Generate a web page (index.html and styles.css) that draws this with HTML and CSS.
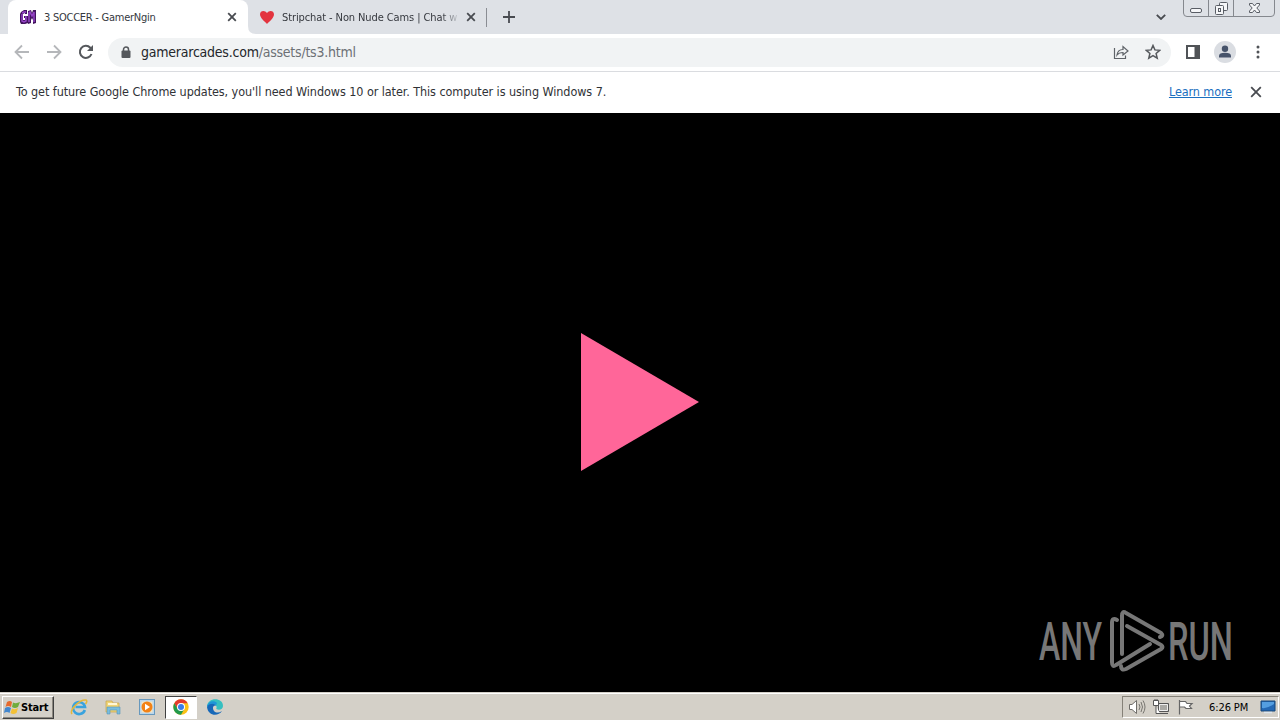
FILE: index.html
```html
<!DOCTYPE html>
<html lang="en">
<head>
<meta charset="utf-8">
<title>3 SOCCER - GamerNgin</title>
<link rel="stylesheet" href="styles.css">
</head>
<body>
<div class="screen">
  <header class="tabstrip">
    <div class="tab tab-active">
      <svg class="favicon" width="16" height="16" viewBox="0 0 16 16"><path d="M1 3L4 1H7V5H5V4L3 5V11H5V9H4V7H8V14L5 15H1L0 13V5ZM8 2L11 1L12 4L13 1H16V14L13 15V9L12 11L11 9V14L8 15Z" fill="#43145f"/><path d="M2 4L4 3H6M2 5V12L4 13L6 12V8H5M9 13V4L10 3L12 7L14 3V13" fill="none" stroke="#9544c6" stroke-width="1.5"/></svg>
      <span class="tab-title title-one">3 SOCCER - GamerNgin</span>
      <svg class="tab-close" width="10" height="10" viewBox="0 0 10 10"><path d="M1.2 1.2L8.8 8.8M8.8 1.2L1.2 8.8"/></svg>
      <svg class="tab-foot" width="8" height="8" viewBox="0 0 8 8"><path d="M0 0Q0 8 8 8H0Z" fill="#fff"/></svg>
    </div>
    <div class="tab tab-second">
      <svg class="favicon" width="16" height="16" viewBox="0 0 16 16"><path d="M8 15C6 13 1 9 1 5.3C1 1.4 6 .8 8 4C10 .8 15 1.4 15 5.3C15 9 10 13 8 15Z" fill="#e3343f"/></svg>
      <span class="tab-title title-two">Stripchat - Non Nude Cams | Chat w</span>
      <svg class="tab-close" width="10" height="10" viewBox="0 0 10 10"><path d="M1.2 1.2L8.8 8.8M8.8 1.2L1.2 8.8"/></svg>
    </div>
    <span class="tab-divider"></span>
    <svg class="new-tab" width="12" height="12" viewBox="0 0 12 12"><path d="M6 0V12M0 6H12"/></svg>
    <svg class="tab-search" width="10" height="6" viewBox="0 0 10 6"><path d="M.8 .8L5 5L9.200 .8"/></svg>
    <svg class="window-buttons" width="95" height="18" viewBox="0 0 95 18"><path d="M1.500 0V13Q1.500 16.500 5 16.500H89Q92.500 16.500 92.500 13V0M26.500 0V16M51.500 0V16" fill="none" stroke="#85888e"/><g fill="#f5f6f8" stroke="#595d65"><rect x="8.500" y="8.500" width="11" height="4" rx="1.500"/><rect x="37.500" y="2.500" width="8" height="8" rx="1"/><rect x="33.500" y="5.500" width="8" height="9" rx="1"/><rect x="36.500" y="8.500" width="2" height="3"/><path d="M67.500 3.500H70.500L72.500 6L74.500 3.500H77.500V5L74.800 8L77.500 11V12.500H74.500L72.500 10L70.500 12.500H67.500V11L70.200 8L67.500 5Z"/></g></svg>
  </header>
  <div class="toolbar">
    <svg class="nav-icon" width="16" height="16" viewBox="0 0 16 16"><path d="M15 8H2M8 1.500L1.500 8L8 14.500" fill="none" stroke="#b5b7ba" stroke-width="1.800"/></svg>
    <svg class="nav-icon" width="16" height="16" viewBox="0 0 16 16"><path d="M1 8H14M8 1.500L14.500 8L8 14.500" fill="none" stroke="#b5b7ba" stroke-width="1.800"/></svg>
    <svg class="nav-icon" width="16" height="16" viewBox="0 0 16 16"><path d="M13.500 10A6 6 0 1 1 12.300 3.800L14 5.500" fill="none" stroke="#55585c" stroke-width="2"/><path d="M15 1V7H9Z" fill="#55585c"/></svg>
    <div class="omnibox">
      <svg class="lock" width="10" height="13" viewBox="0 0 10 13"><path d="M2.500 6V3.500A2.500 2.500 0 0 1 7.500 3.500V6" fill="none" stroke="#55585c" stroke-width="1.500"/><rect x="0.500" y="4.500" width="9" height="7.500" rx="1" fill="#55585c"/></svg>
      <span class="url"><span class="host">gamerarcades.com</span><span class="path">/assets/ts3.html</span></span>
      <svg class="share" width="16" height="16" viewBox="0 0 16 16"><path d="M1.500 4V14.500H12.500V11.500M4 11C4.500 7 7 5.500 10 5.500V2.500L15 7L10 11V8.500C7.500 8.500 5.500 9 4 11Z" fill="none" stroke="#5f6368" stroke-width="1.200"/></svg>
      <svg class="star" width="16" height="16" viewBox="0 0 16 16"><path d="M8 1.500L9.900 5.900L14.700 6.300L11.100 9.500L12.200 14.200L8 11.700L3.800 14.200L4.900 9.500L1.300 6.300L6.100 5.900Z" fill="none" stroke="#55585c" stroke-width="1.500"/></svg>
    </div>
    <svg class="side-panel" width="14" height="14" viewBox="0 0 14 14"><path d="M1 1H13V13H1Z" fill="none" stroke="#505357" stroke-width="2"/><path d="M8.500 0H14V14H8.500Z" fill="#505357"/></svg>
    <svg class="avatar" width="22" height="22" viewBox="0 0 22 22"><circle cx="11" cy="11" r="11" fill="#dadde2"/><circle cx="11" cy="7.700" r="3.200" fill="#46536a"/><path d="M5 16.500V15Q5 11.800 11 11.800Q17 11.800 17 15V16.500Z" fill="#46536a"/></svg>
    <svg class="menu" width="4" height="14" viewBox="0 0 4 14"><g fill="#505357"><circle cx="2" cy="2" r="1.500"/><circle cx="2" cy="7" r="1.500"/><circle cx="2" cy="12" r="1.500"/></g></svg>
  </div>
  <div class="infobar">
    <span class="notice">To get future Google Chrome updates, you'll need Windows 10 or later. This computer is using Windows 7.</span>
    <span class="learn">Learn more</span>
    <svg class="info-close" width="12" height="12" viewBox="0 0 12 12"><path d="M1.200 1.200L10.800 10.800M10.800 1.200L1.200 10.800"/></svg>
  </div>
  <main class="content">
    <svg class="play" width="118" height="138" viewBox="0 0 118 138"><path d="M0 0L118 69L0 138Z" fill="#ff6699"/></svg>
    <svg class="watermark" width="210" height="70" viewBox="0 0 210 70">
      <text class="brand" x="4" y="54" textLength="63" lengthAdjust="spacingAndGlyphs">ANY</text>
      <g fill="none" stroke="#777" stroke-width="4" stroke-linejoin="round" stroke-linecap="round"><path d="M82 14Q77 11 77 17V56Q77 62 81 59L115 38"/><path d="M87 48V10Q87 4 91 7L126 27Q129 30 125 31"/><path d="M92 20L126 39Q129 41 126 43L91 63Q86 65 86 60"/></g>
      <text class="brand" x="133" y="54" textLength="65" lengthAdjust="spacingAndGlyphs">RUN</text>
    </svg>
  </main>
  <footer class="taskbar">
    <div class="start">
      <svg width="17" height="16" viewBox="0 0 17 16"><path d="M3 3Q6 1 8 3L7 8Q4 6 1.500 8Z" fill="#e66a2d"/><path d="M9 3.500Q12 5 16 3L14 8Q11 10 8 8Z" fill="#70ac3c"/><path d="M1 9Q4 7 7 9L5.500 14Q3 12 0 14Z" fill="#4387ce"/><path d="M8 9.500Q11 11 14 9L12.500 14Q9 16 6.500 14Z" fill="#f4c136"/></svg>
      <span class="start-label">Start</span>
    </div>
    <div class="launch">
      <svg width="18" height="18" viewBox="0 0 18 18"><path d="M14.800 12A6 6 0 1 1 15 9H5.500" fill="none" stroke="#3aa3de" stroke-width="2.600"/><path d="M2 16C-1 12 10 1 16 2C18 3 15.500 6 15.500 6" fill="none" stroke="#e5b83b" stroke-width="1.500"/></svg>
    </div>
    <div class="launch">
      <svg width="18" height="18" viewBox="0 0 18 18"><path d="M2 3H8L9 5H15V14H2Z" fill="#efd477" stroke="#c7a44a" stroke-width=".7"/><path d="M4 5H13V7H4Z" fill="#fff7d6"/><path d="M3 9H16V16H13V12H6V16H3Z" fill="#79bddd" stroke="#5596b8" stroke-width=".6"/></svg>
    </div>
    <div class="launch">
      <svg width="18" height="18" viewBox="0 0 18 18"><rect x="1.500" y="1.500" width="15" height="15" fill="#b9d6ec" stroke="#6798bd"/><rect x="3.500" y="3.500" width="11" height="11" fill="#f6e4bf"/><circle cx="9" cy="9" r="5.500" fill="#f28216"/><path d="M7 5.800L12 9L7 12.200Z" fill="#fff"/></svg>
    </div>
    <div class="launch launch-active">
      <svg width="18" height="18" viewBox="0 0 18 18"><circle cx="9" cy="9" r="7.700" fill="#fbc116"/><path d="M2.300 5.200A7.700 7.700 0 0 1 15.700 5.200H9L5.700 11Z" fill="#e33b2e"/><path d="M2.300 5.200A7.700 7.700 0 0 0 9 16.700L12.300 11H5.700Z" fill="#229a4c"/><circle cx="9" cy="9" r="4" fill="#fff"/><circle cx="9" cy="9" r="3" fill="#3a7de9"/></svg>
    </div>
    <div class="launch">
      <svg width="18" height="18" viewBox="0 0 18 18"><path d="M1 9C1-1 17-1 17 8C17 11 14 12.300 10.800 11.300C9.500 10.800 11 10 10.500 8.500C9 5 3 5 1 9Z" fill="#36bfc0"/><path d="M1 9C2 5 8 4 10 7.500C7 7 6 10 8 13C10 15 13 15 16 13C12 19 2 18 1 9Z" fill="#1768b8"/><path d="M1 9C2 3 8 2 11 5L10 7.500C7 4.500 3 6 1 9Z" fill="#1f96d8"/></svg>
    </div>
    <div class="tray">
      <svg width="18" height="18" viewBox="0 0 18 18"><path d="M1.500 6.500H4L8.500 2.500V15.500L4 11.500H1.500Z" fill="#fff" stroke="#6f6d69"/><path d="M11 6Q13 9 11 12M13 4Q16 9 13 14M15 2.500Q19 9 15 15.500" fill="none" stroke="#777570"/></svg>
      <svg class="network" width="18" height="18" viewBox="0 0 18 18"><path d="M6.500 5.500H16.500V13.500H6.500ZM8 15.500H16" fill="#aaa9a5" stroke="#555"/><path d="M7.500 6.500H15.500V12.500H7.500Z" fill="none" stroke="#eee"/><path d="M1.500 2.500H6.500V7.500H1.500ZM3 1V3M5 1V3M4 8V15.500H8" fill="#fff" stroke="#555"/></svg>
      <svg class="flag" width="18" height="18" viewBox="0 0 18 18"><path d="M3.500 2V16.500M4 3.500H9.500L11 5.500H16L13.500 8L15.500 10.500H10L8.500 9H4" fill="#fff" stroke="#666" stroke-width="1.200"/></svg>
      <span class="clock">6:26 PM</span>
      <svg class="desktop" width="16" height="14" viewBox="0 0 16 14"><path d="M1 1H15V11H1Z" fill="#2468b4" stroke="#174679"/><path d="M2 2H14V4Q7 9 2 8Z" fill="#549ee0"/><path d="M4 12.500H12" stroke="#dce5ed" stroke-width="1.500"/></svg>
    </div>
  </footer>
</div>
</body>
</html>
```
FILE: styles.css
```css
* { box-sizing: border-box; }
body { margin: 0; font-family: "DejaVu Sans Condensed", "DejaVu Sans", sans-serif; font-stretch: condensed; }
svg { display: block; flex: none; }
.screen { width: 1280px; height: 720px; display: flex; flex-direction: column; overflow: hidden; background: #fff; }
.tabstrip { height: 34px; flex: none; display: flex; align-items: center; background: #dee1e6; }
.tab { position: relative; height: 34px; display: flex; align-items: center; flex: none; white-space: nowrap; color: #35383e; font-size: 11px; }
.tab-active { width: 240px; margin-left: 8px; padding-left: 12px; background: #fff; border-radius: 8px 8px 0 0; }
.tab-second { width: 238px; padding-left: 11px; }
.tab-foot { position: absolute; left: 240px; bottom: 0; }
.tab-title { margin-left: 8px; padding-top: 1px; line-height: 18px; }
.title-one { width: 180px; letter-spacing: -0.25px; }
.title-two { width: 176px; margin-left: 7px; letter-spacing: -0.1px; -webkit-mask-image: linear-gradient(90deg, #000 160px, transparent 178px); mask-image: linear-gradient(90deg, #000 160px, transparent 178px); }
.tab-close { margin-left: 3px; }
.title-two + .tab-close { margin-left: 8px; }
.tab-close path, .info-close path, .new-tab path, .tab-search path { fill: none; stroke: #484b50; stroke-width: 1.8; }
.tab-divider { width: 1px; height: 19px; background: #8a8d93; }
.new-tab { margin-left: 16px; }
.tab-search { margin-left: auto; }
.window-buttons { align-self: flex-start; margin-left: 16px; margin-right: 3px; }
.toolbar { height: 38px; flex: none; display: flex; align-items: center; padding: 0 20px 1px 14px; border-bottom: 1px solid #dadce0; }
.nav-icon { margin-right: 16px; }
.omnibox { width: 1065px; height: 29px; margin-left: -2px; display: flex; align-items: center; background: #f1f3f4; border-radius: 15px; padding: 0 10px 0 13px; }
.url { margin-left: 10px; flex: 1; font-size: 14px; line-height: 20px; white-space: nowrap; letter-spacing: -0.23px; }
.host { color: #24272b; }
.path { color: #6c7075; }
.star { margin-left: 16px; }
.side-panel { margin-left: 15px; }
.avatar { margin-left: 14px; }
.menu { margin-left: 20px; }
.infobar { height: 41px; flex: none; display: flex; align-items: center; padding: 0 18px 2px 16px; font-size: 12.5px; color: #303236; white-space: nowrap; }
.notice { letter-spacing: -0.07px; }
.learn { margin-left: auto; margin-right: 18px; color: #1a6fc0; text-decoration: underline; letter-spacing: -0.1px; }
.content { height: 579px; flex: none; position: relative; display: flex; align-items: center; justify-content: center; padding-bottom: 1px; background: #000; }
.watermark { position: absolute; left: 1035px; top: 493px; }
.brand { fill: #777; font: 500 53px Roboto, sans-serif; }
.taskbar { height: 28px; flex: none; display: flex; align-items: center; padding: 2px 1px 1px 2px; border-top: 1px solid #d4d0c8; box-shadow: inset 0 1px #fff; background: #d4d0c8; }
.start { width: 52px; height: 23px; display: flex; align-items: center; padding-left: 1px; border: 1px solid; border-color: #fff #404040 #404040 #fff; box-shadow: inset -1px -1px #8c8880; margin-right: 9px; }
.start-label { font-size: 11px; font-weight: bold; letter-spacing: -0.15px; color: #000; }
.launch { width: 32px; height: 23px; margin-right: 2px; display: flex; align-items: center; justify-content: center; }
.launch-active { background: #fff; border: 1px solid; border-color: #404040 #fff #fff #404040; }
.tray { width: 157px; height: 22px; margin-left: auto; display: flex; align-items: center; padding-left: 5px; border: 1px solid; border-color: #858178 #fff #fff #858178; }
.network { margin-left: 6px; }
.flag { margin-left: 6px; }
.clock { width: 43px; margin-left: 15px; font-size: 11px; color: #000; white-space: nowrap; letter-spacing: -0.1px; }
.desktop { margin-left: 8px; }
```
